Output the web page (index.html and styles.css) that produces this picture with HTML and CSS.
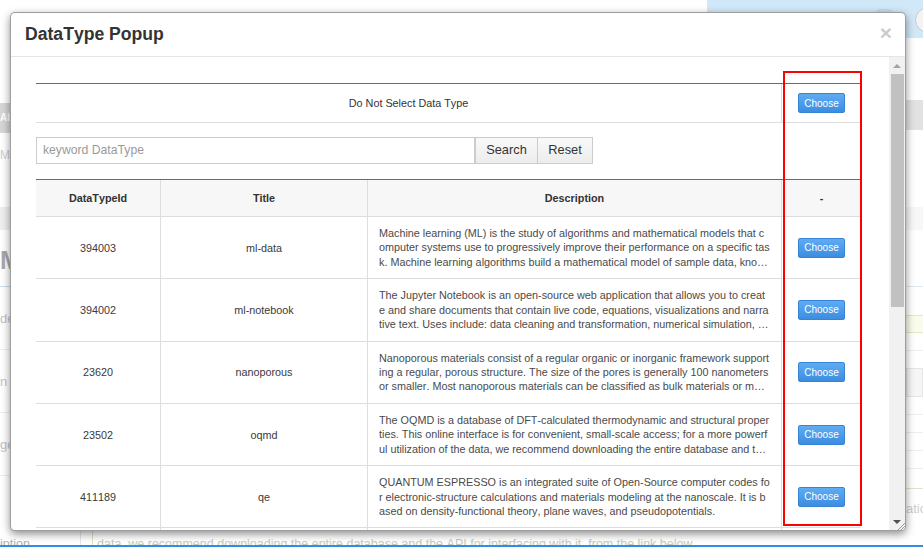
FILE: index.html
```html
<!DOCTYPE html>
<html lang="en">
<head>
<meta charset="utf-8">
<title>DataType Popup</title>
<link rel="stylesheet" href="styles.css">
</head>
<body>
<div class="page">
  <div class="topbar">
    <div class="topbar-band"><span class="pill"></span><span class="avatar"></span></div>
  </div>
  <div class="main">
    <div class="leftnav">
      <div class="nav-head">About</div>
      <div class="nav-sub">Manage</div>
      <div class="nav-bar"></div>
      <div class="nav-big">M</div>
      <div class="nav-row">de</div>
      <div class="nav-row">n</div>
      <div class="nav-row">ge</div>
    </div>
    <div class="center"></div>
    <div class="rightpanel">
      <div class="rp-head"></div>
      <div class="rp-light"></div>
      <div class="rp-sep"></div>
      <div class="rp-yellow"></div>
      <div class="rp-line"></div>
      <div class="rp-box"></div>
      <div class="rp-line short"></div>
      <div class="rp-line short"></div>
      <div class="rp-line"></div>
      <div class="rp-line short"></div>
      <div class="rp-green"></div>
      <div class="rp-text">atic</div>
    </div>
  </div>
  <div class="footer">
    <div class="f-label">iption</div>
    <div class="f-text">data, we recommend downloading the entire database and the API for interfacing with it, from the link below.</div>
  </div>
</div>

<div class="modal">
  <div class="modal-header">
    <h4 class="modal-title">DataType Popup</h4>
    <span class="close">&times;</span>
  </div>
  <div class="modal-body">
    <div class="content">
      <div class="none-table">
        <div class="cell">Do Not Select Data Type</div>
        <div class="cell"><button class="btn-choose">Choose</button></div>
      </div>

      <div class="search-row">
        <input class="search-input" type="text" placeholder="keyword DataType">
        <button class="btn-default">Search</button>
        <button class="btn-default reset">Reset</button>
      </div>

      <div class="data-table">
        <div class="row head">
          <div class="cell">DataTypeId</div>
          <div class="cell">Title</div>
          <div class="cell">Description</div>
          <div class="cell">-</div>
        </div>
        <div class="row">
          <div class="cell">394003</div>
          <div class="cell">ml-data</div>
          <div class="cell desc"><p class="clamp">Machine learning (ML) is the study of algorithms and mathematical models that computer systems use to progressively improve their performance on a specific task. Machine learning algorithms build a mathematical model of sample data, known as "training data", in order to make predictions or decisions.</p></div>
          <div class="cell"><button class="btn-choose">Choose</button></div>
        </div>
        <div class="row">
          <div class="cell">394002</div>
          <div class="cell">ml-notebook</div>
          <div class="cell desc"><p class="clamp">The Jupyter Notebook is an open-source web application that allows you to create and share documents that contain live code, equations, visualizations and narrative text. Uses include: data cleaning and transformation, numerical simulation, statistical modeling, data visualization and machine learning.</p></div>
          <div class="cell"><button class="btn-choose">Choose</button></div>
        </div>
        <div class="row">
          <div class="cell">23620</div>
          <div class="cell">nanoporous</div>
          <div class="cell desc"><p class="clamp">Nanoporous materials consist of a regular organic or inorganic framework supporting a regular, porous structure. The size of the pores is generally 100 nanometers or smaller. Most nanoporous materials can be classified as bulk materials or membranes.</p></div>
          <div class="cell"><button class="btn-choose">Choose</button></div>
        </div>
        <div class="row">
          <div class="cell">23502</div>
          <div class="cell">oqmd</div>
          <div class="cell desc"><p class="clamp">The OQMD is a database of DFT-calculated thermodynamic and structural properties. This online interface is for convenient, small-scale access; for a more powerful utilization of the data, we recommend downloading the entire database and the API for interfacing with it, from the link below.</p></div>
          <div class="cell"><button class="btn-choose">Choose</button></div>
        </div>
        <div class="row">
          <div class="cell">411189</div>
          <div class="cell">qe</div>
          <div class="cell desc"><p class="clamp">QUANTUM ESPRESSO is an integrated suite of Open-Source computer codes for electronic-structure calculations and materials modeling at the nanoscale. It is based on density-functional theory, plane waves, and pseudopotentials.</p></div>
          <div class="cell"><button class="btn-choose">Choose</button></div>
        </div>
        <div class="row">
          <div class="cell">411188</div>
          <div class="cell">lammps</div>
          <div class="cell desc"><p class="clamp">LAMMPS is a classical molecular dynamics code with a focus on materials modeling.</p></div>
          <div class="cell"><button class="btn-choose">Choose</button></div>
        </div>
      </div>
    </div>
    <div class="scrollbar">
      <div class="sb-arrow"><svg width="8" height="4" viewBox="0 0 8 4"><polygon points="0,4 8,4 4,0" fill="#a3a3a3"/></svg></div>
      <div class="sb-track"><div class="sb-thumb"></div></div>
      <div class="sb-arrow"><svg width="8" height="4" viewBox="0 0 8 4"><polygon points="0,0 8,0 4,4" fill="#505050"/></svg></div>
      <svg class="grip" width="8" height="8" viewBox="0 0 8 8"><path d="M1 8 L8 1 M4 8 L8 4 M7 8 L8 7" stroke="#9a9a9a" stroke-width="1"/></svg>
    </div>
  </div>
</div>

<div class="annotation"></div>
</body>
</html>
```

FILE: styles.css
```css
* { box-sizing: border-box; }
html, body { margin: 0; padding: 0; }
body {
  width: 923px;
  height: 547px;
  overflow: hidden;
  position: relative;
  background: #fff;
  color: #333;
  font-family: "Liberation Sans", Arial, sans-serif;
  font-kerning: none;
}

/* ---------- background page ---------- */
.page { display: flex; flex-direction: column; height: 547px; }
.topbar { height: 38px; flex: none; display: flex; justify-content: flex-end; }
.topbar-band {
  width: 216px;
  background: #d0e8f8;
  display: flex;
  align-items: flex-start;
  justify-content: flex-end;
  gap: 22px;
  padding-top: 7px;
  overflow: hidden;
}
.pill { width: 17px; height: 12px; margin-top: 2px; border-radius: 4px; background: #c3daec; }
.avatar { width: 26px; height: 26px; border-radius: 50%; background: #f3f3f3; border: 1px solid #c9c9c9; margin-right: -18px; }

.main { flex: 1; display: flex; min-height: 0; }
.leftnav { width: 80px; flex: none; font-size: 13px; }
.nav-head { margin-top: 65px; height: 30px; line-height: 30px; background: #d6d6d6; color: #fff; font-weight: bold; font-size: 10px; }
.nav-sub { height: 74px; padding-top: 14px; line-height: 16px; color: #cfcfcf; font-size: 12px; }
.nav-bar { height: 23px; background: #efefef; }
.nav-big { height: 57px; padding-top: 18px; line-height: 24px; font-size: 25px; font-weight: bold; color: #a8a8a8; border-bottom: 1px solid #cddcea; }
.nav-row { height: 63px; display: flex; align-items: center; color: #c2c2c2; border-bottom: 1px solid #eeeeee; }
.center { flex: 1; }
.rightpanel { width: 17px; flex: none; overflow: hidden; }
.rp-head { margin-top: 62px; height: 30px; background: #e2e2e2; }
.rp-light { margin-top: 77px; height: 23px; background: #f7f7f7; }
.rp-sep { height: 57px; border-bottom: 1px solid #dde7f0; }
.rp-yellow { margin-top: 28px; height: 18px; background: #fbfbec; border-top: 1px solid #dfe8c8; border-bottom: 1px solid #dfe8c8; }
.rp-line { height: 18px; border-bottom: 1px solid #eeeeee; }
.rp-line.short { height: 18px; }
.rp-box { margin-top: 17px; height: 29px; background: #f6f6f6; border: 1px solid #e6e6e6; }
.rp-green { height: 20px; border-bottom: 1px solid #d9e6c8; }
.rp-text { padding-top: 12px; font-size: 13px; color: #cdcdcd; }

.footer {
  height: 17px;
  flex: none;
  display: flex;
  overflow: hidden;
  border-bottom: 2px solid #2f8de2;
  font-size: 12.5px;
  line-height: 15px;
}
.f-label { width: 81px; padding-top: 7px; color: #b0b0b0; border-right: 1px solid #e6e6e6; }
.f-text { margin-left: 11px; padding: 7px 0 0 4px; color: #c5cbb9; border-left: 1px solid #d5e3c3; white-space: nowrap; }

/* ---------- modal ---------- */
.modal {
  position: absolute;
  left: 10px;
  top: 12px;
  width: 896px;
  height: 519px;
  background: #fff;
  border: 1px solid rgba(0, 0, 0, 0.38);
  border-radius: 5px;
  box-shadow: 0 3px 9px rgba(0, 0, 0, 0.45);
  display: flex;
  flex-direction: column;
  overflow: hidden;
}
.modal-header {
  height: 44px;
  flex: none;
  border-bottom: 1px solid #e5e5e5;
  display: flex;
  align-items: center;
  justify-content: space-between;
  padding: 0 13px 0 14px;
}
.modal-title { margin: 0; font-size: 17.6px; font-weight: bold; color: #333; }
.close { font-size: 21px; font-weight: bold; line-height: 1; color: #000; opacity: 0.2; margin-top: -5px; }

.modal-body { flex: 1; display: flex; min-height: 0; }
.content { flex: 1; overflow: hidden; padding: 26px 28px 0 25px; font-size: 10.8px; color: #333; }

.none-table {
  display: grid;
  grid-template-columns: 1fr 80px;
  border-top: 1px solid #4075a9;
}
.none-table .cell {
  height: 39px;
  display: flex;
  align-items: center;
  justify-content: center;
  border-bottom: 1px solid #dddddd;
}
.none-table .cell + .cell { border-left: 1px solid #dddddd; }

.search-row { margin-top: 14px; display: flex; height: 27px; }
.search-input {
  width: 439px;
  height: 27px;
  margin: 0;
  border: 1px solid #cccccc;
  padding: 0 6px 2px;
  font-family: "Liberation Sans", Arial, sans-serif;
  font-size: 12.2px;
  color: #555;
  outline: none;
  border-radius: 0;
}
.search-input::placeholder { color: #9a9a9a; }
.btn-default {
  height: 27px;
  margin: 0;
  padding: 0 0 3px;
  width: 63px;
  border: 1px solid #cccccc;
  border-radius: 0;
  background: linear-gradient(#f9f9f9, #ececec);
  font-family: "Liberation Sans", Arial, sans-serif;
  font-size: 12.8px;
  color: #333;
}
.btn-default.reset { width: 56px; margin-left: -1px; }

.data-table {
  margin-top: 15px;
  display: grid;
  grid-template-columns: 124px 207px 414px 80px;
  border-top: 1px solid #4075a9;
}
.row { display: contents; }
.row .cell {
  height: 62.3px;
  display: flex;
  align-items: center;
  justify-content: center;
  border-bottom: 1px solid #dddddd;
  color: #3a3a3a;
}
.row .cell + .cell { border-left: 1px solid #dddddd; }
.row.head .cell { height: 37px; background: #f7f7f7; font-weight: bold; color: #333; }
.row .cell.desc { justify-content: flex-start; padding: 0 11px; }
.clamp {
  width: 100%;
  margin: 0;
  line-height: 14.4px;
  color: #4a4a4a;
  text-align: left;
  word-break: break-all;
  display: -webkit-box;
  -webkit-box-orient: vertical;
  -webkit-line-clamp: 3;
  overflow: hidden;
}

.btn-choose {
  width: 47px;
  height: 20px;
  padding: 0;
  margin: 0;
  border: 1px solid #3784d6;
  border-radius: 2px;
  background: linear-gradient(#60acf3, #3b8de0);
  color: #fff;
  font-family: "Liberation Sans", Arial, sans-serif;
  font-size: 10px;
}

/* ---------- fake scrollbar ---------- */
.scrollbar {
  width: 16px;
  flex: none;
  background: #f1f1f1;
  display: flex;
  flex-direction: column;
  position: relative;
}
.sb-arrow { height: 17px; flex: none; display: flex; align-items: center; justify-content: center; }
.sb-track { flex: 1; padding: 0 1px 0 2px; }
.sb-thumb { height: 233px; background: #c1c1c1; }
.grip { position: absolute; right: 0; bottom: 0; }

/* ---------- annotation ---------- */
.annotation {
  position: absolute;
  left: 783px;
  top: 71px;
  width: 79px;
  height: 455px;
  border: 2px solid #ff0000;
}
```
